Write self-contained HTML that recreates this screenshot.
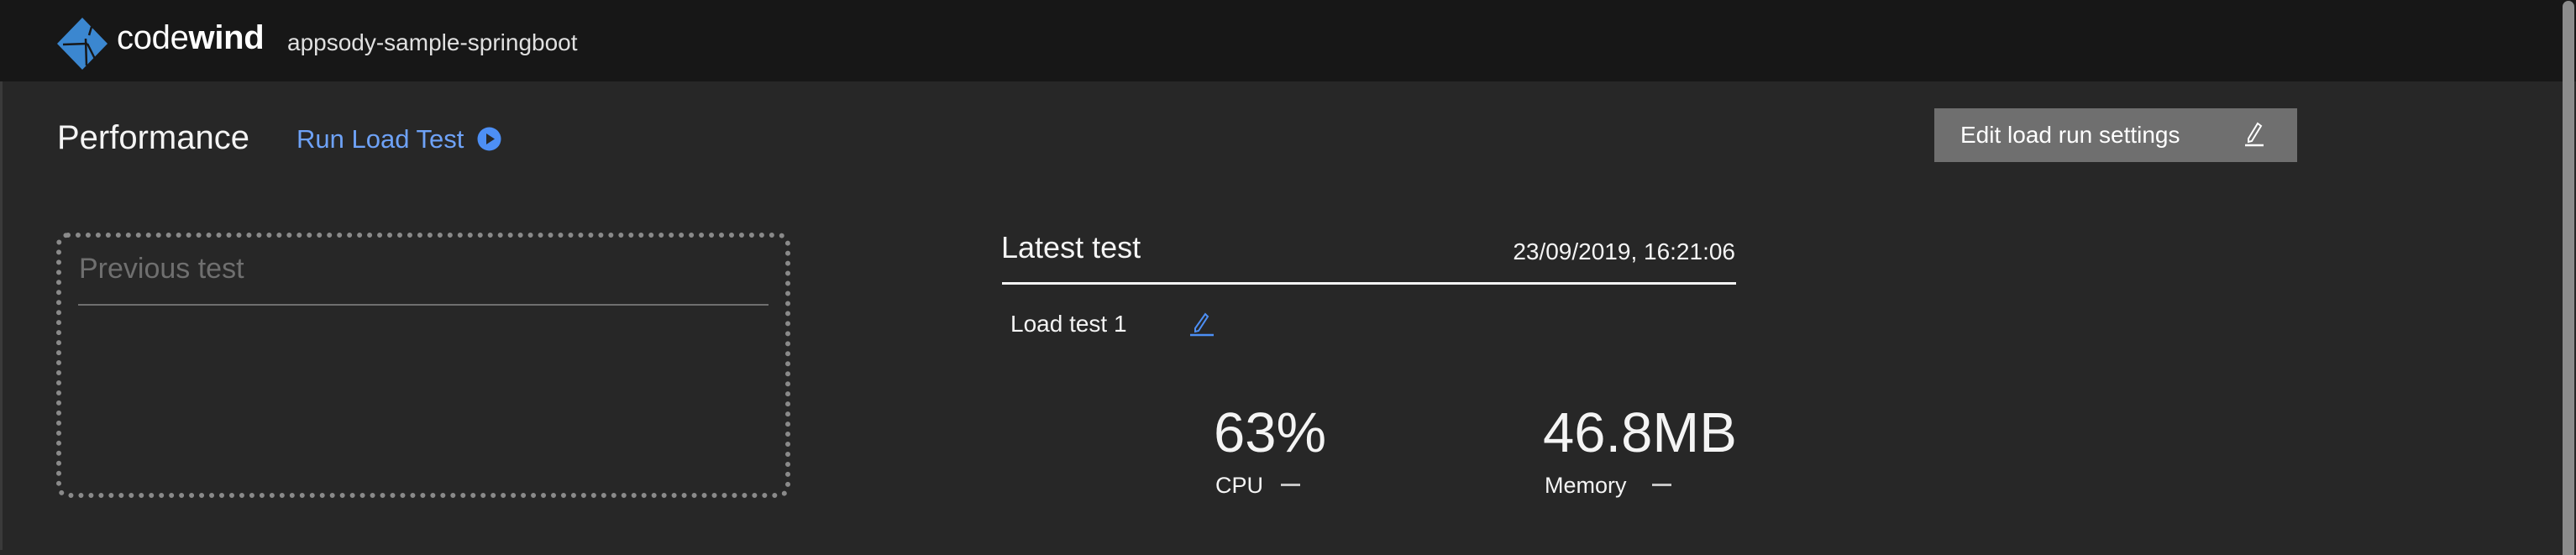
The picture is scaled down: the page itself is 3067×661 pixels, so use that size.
<!DOCTYPE html>
<html><head><meta charset="utf-8"><style>
html,body{margin:0;padding:0;width:3067px;height:655px;overflow:hidden;background:#272727;font-family:"Liberation Sans",sans-serif;}
.a{position:absolute;white-space:nowrap;}
#hdr{position:absolute;left:0;top:0;width:3067px;height:97px;background:#171717;}
</style></head><body>
<div class="a" style="left:0;top:0;width:3px;height:655px;background:#3a3a3a"></div>
<div id="hdr"></div>
<svg class="a" style="left:66px;top:20px" width="64" height="64" viewBox="0 0 64 64">
<polygon points="32,1 62,32 32,63 2,32" fill="#3b87d0"/>
<path d="M9 33 L38 32 M36 26 L37 58 M38 32 L47 50 M40 22 L43 12" stroke="#171717" stroke-width="2.5" fill="none"/>
</svg>
<div class="a" style="left:139px;top:23px;font-size:40px;color:#fff;letter-spacing:-0.3px">code<b>wind</b></div>
<div class="a" style="left:342px;top:35px;font-size:28px;color:#e0e0e0">appsody-sample-springboot</div>

<div class="a" style="left:68px;top:142px;font-size:40px;color:#f4f4f4">Performance</div>
<div class="a" style="left:353px;top:148px;font-size:31px;color:#6ea2f7">Run Load Test</div>
<svg class="a" style="left:568px;top:151px" width="29" height="29" viewBox="0 0 29 29"><circle cx="14.5" cy="14.5" r="14" fill="#4d8ff5"/><polygon points="11,8 21,14.5 11,21" fill="#272727"/></svg>

<div class="a" style="left:2303px;top:129px;width:432px;height:64px;background:#6f6f6f"></div>
<div class="a" style="left:2334px;top:145px;font-size:28px;color:#fff">Edit load run settings</div>
<svg class="a" style="left:2668px;top:144px" width="30" height="32" viewBox="0 0 30 32"><path d="M20 3 L24 6 L13 24 L9 25 L9 21 Z" stroke="#fff" stroke-width="2" fill="none"/><line x1="5" y1="29" x2="27" y2="29" stroke="#fff" stroke-width="2.5"/></svg>

<div class="a" style="left:67px;top:277px;width:862px;height:304px;border:6px dotted #8a8a8a;border-radius:14px"></div>
<div class="a" style="left:94px;top:301px;font-size:34px;color:#6f6f6f">Previous test</div>
<div class="a" style="left:93px;top:362px;width:822px;height:2px;background:#6f6f6f"></div>

<div class="a" style="left:1192px;top:274px;font-size:36px;color:#f4f4f4">Latest test</div>
<div class="a" style="left:1772px;top:284px;font-size:28px;color:#f4f4f4;width:294px;text-align:right">23/09/2019, 16:21:06</div>
<div class="a" style="left:1193px;top:336px;width:874px;height:3px;background:#f4f4f4"></div>
<div class="a" style="left:1203px;top:370px;font-size:28px;color:#f4f4f4">Load test 1</div>
<svg class="a" style="left:1415px;top:372px" width="32" height="30" viewBox="0 0 32 30"><path d="M20 2 L23 5 L12 22 L8 23 L8 19 Z" stroke="#4d8ff5" stroke-width="2" fill="none"/><line x1="2" y1="27" x2="30" y2="27" stroke="#4d8ff5" stroke-width="2.5"/></svg>

<div class="a" style="left:1445px;top:477px;font-size:67px;color:#f4f4f4">63%</div>
<div class="a" style="left:1837px;top:477px;font-size:67px;color:#f4f4f4">46.8MB</div>
<div class="a" style="left:1447px;top:563px;font-size:27px;color:#f4f4f4">CPU</div>
<div class="a" style="left:1525px;top:576px;width:23px;height:3px;background:#c6c6c6"></div>
<div class="a" style="left:1839px;top:563px;font-size:27px;color:#f4f4f4">Memory</div>
<div class="a" style="left:1967px;top:576px;width:23px;height:3px;background:#c6c6c6"></div>

<div class="a" style="left:3051px;top:1px;width:14px;height:660px;background:#8c8c8c;border-radius:7px 7px 0 0"></div>
</body></html>
